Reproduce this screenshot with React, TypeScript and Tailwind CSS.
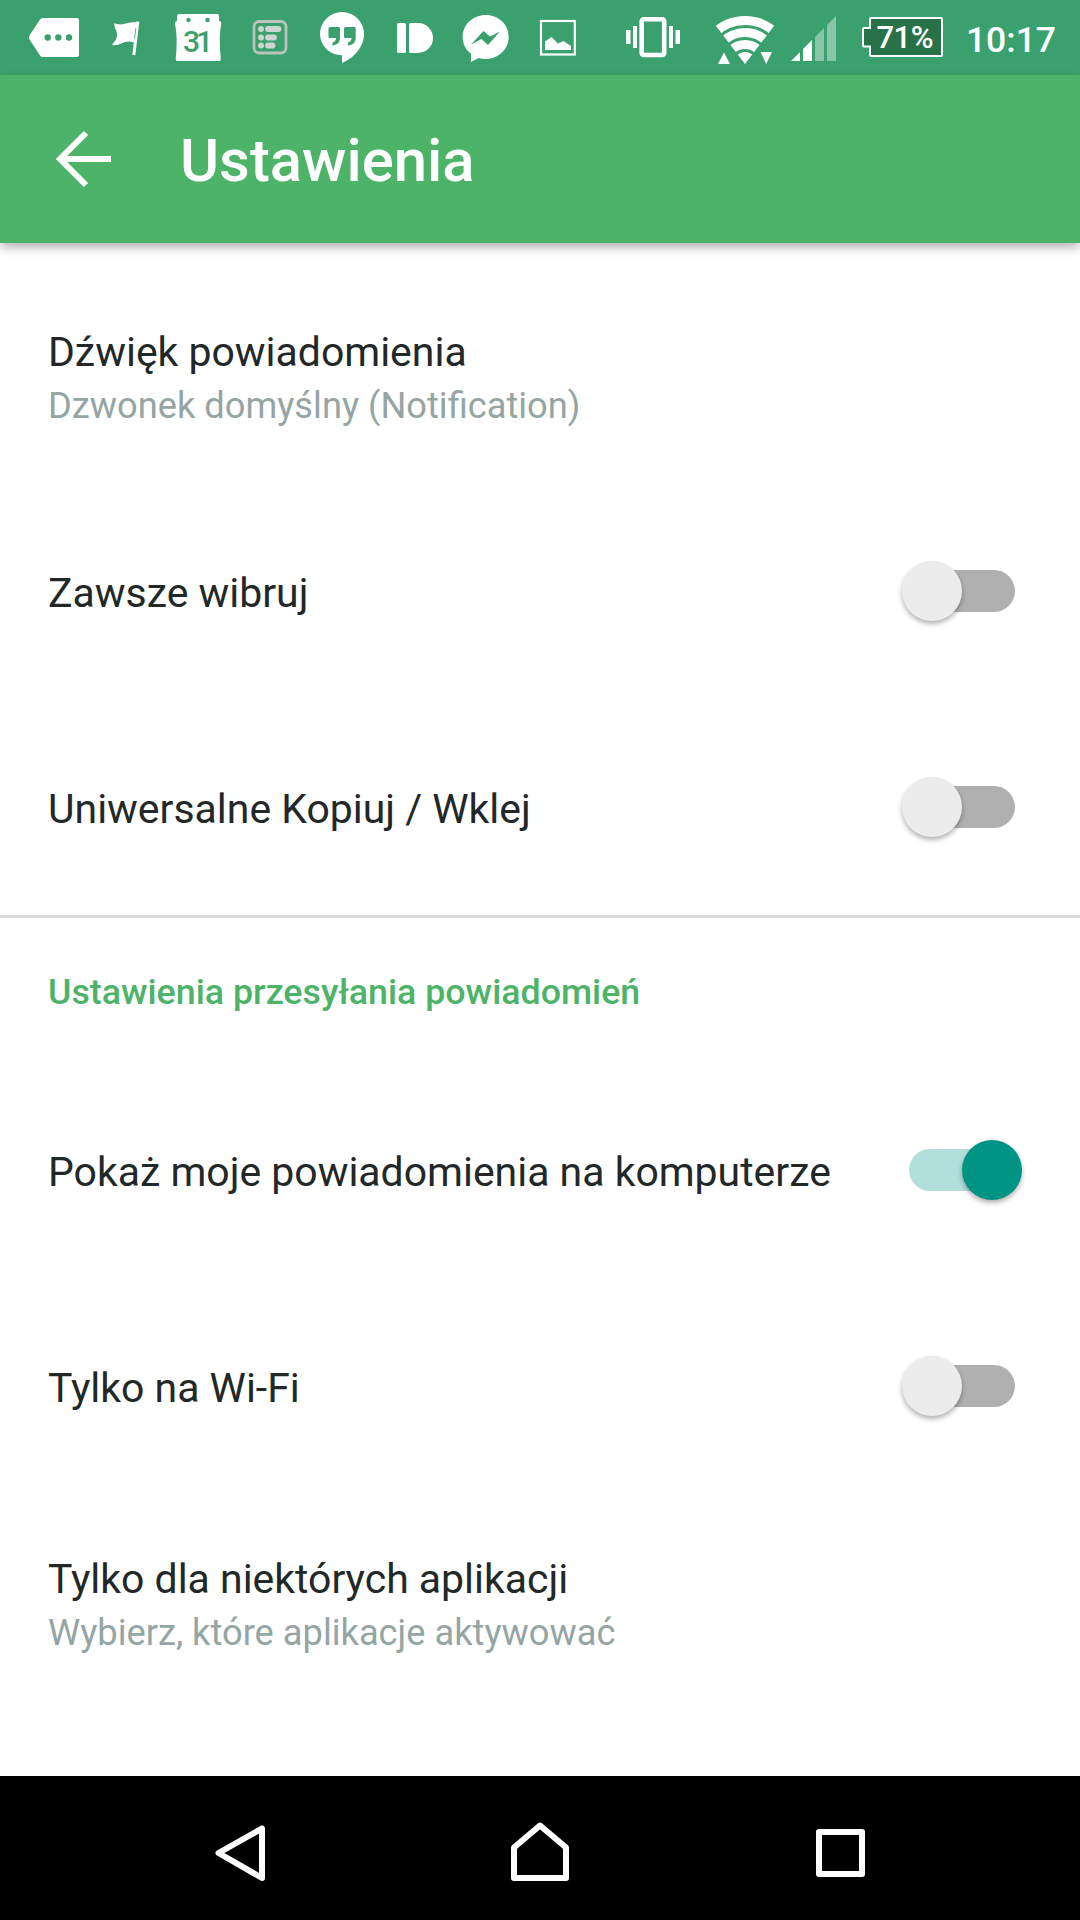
import React from 'react';

interface StatusSlotProps {
    x: number;
    width: number;
    children: React.ReactNode;
}

// Every slot shares the coordinate space of the status bar
const StatusSlot: React.FC<StatusSlotProps> = ({ x, width, children }) => (
    <svg className="shrink-0" width={width} height={75} viewBox={`${x} 0 ${width} 75`} fill="#fff">
        {children}
    </svg>
);

const StatusBar: React.FC = () => (
    <div className="flex h-[75px] bg-[#3aa06d] text-white">
        <StatusSlot x={0} width={100}>
            <path d="M43 18H76.500Q79 18 79 20.500V54.500Q79 57 76.500 57H43Q41 57 40 55.500L29.500 39.500Q28.500 37.500 29.500 35.500L40 19.500Q41 18 43 18Z" />
            <g fill="#3aa06d">
                <circle cx="47.700" cy="37.500" r="3.200" />
                <circle cx="58.300" cy="37.500" r="3.200" />
                <circle cx="69" cy="37.500" r="3.200" />
            </g>
        </StatusSlot>
        <StatusSlot x={100} width={50}>
            <path d="M114.500 23C122 27 128 21 137 22.500L134 42.500C124 39 120 47 112 45C115 41 117.500 38 117 34C116.500 29 113.500 27 114.500 23Z" />
            <path d="M136.500 21.300L139.300 21.800L135.300 55.300L132.300 54.800Z" />
            <path d="M135.800 28L134.600 38.500" stroke="#3aa06d" strokeWidth="0.800" />
        </StatusSlot>
        <StatusSlot x={150} width={90}>
            <path d="M179 14H217Q219 14 219 16V21Q221.500 21 221.200 24Q218.500 37 220.800 59Q221 61 219 61H177.500Q175.500 61 175.700 59Q178 37 175 24Q174.800 21 177 21V16Q177 14 179 14Z" />
            <circle cx="188.500" cy="20" r="2.200" fill="#3aa06d" />
            <circle cx="207.500" cy="20" r="2.200" fill="#3aa06d" />
            <text x="183" y="52" textLength="30" fill="#3aa06d" className="font-['Roboto',sans-serif] text-[30px] font-medium">31</text>
        </StatusSlot>
        <StatusSlot x={240} width={60}>
            <rect x="254" y="21.500" width="32" height="31.500" rx="5" fill="none" stroke="#bcc4ba" strokeWidth="2.800" />
            <g stroke="#cdd6ce" strokeWidth="5.800" strokeLinecap="round">
                <path d="M261 29h.1M261 37.500h.1M261 45.500h.1" />
                <path d="M268 29H278.500M268 37.500H274M268 45.500H272.500" />
            </g>
        </StatusSlot>
        <StatusSlot x={300} width={80}>
            <path d="M342 12A22 22 0 0 1 364 34C364 47 354 58 342 63V55.300A21.500 21.500 0 0 1 320 34A22 22 0 0 1 342 12Z" />
            <path fill="#3aa06d" d="M330 27H338.500Q340 27 340 28.500V38Q340 45 332.500 45.500V42.500Q336 41.500 336 38H330Q328.500 38 328.500 36.500V28.500Q328.500 27 330 27ZM345.500 27H354.200Q355.700 27 355.700 28.500V38Q355.700 45 348 45.500V42.500Q351.500 41.500 351.500 38H345.500Q344 38 344 36.500V28.500Q344 27 345.500 27Z" />
        </StatusSlot>
        <StatusSlot x={380} width={70}>
            <rect x="397" y="23" width="9" height="30" rx="1.500" />
            <path d="M410.500 23H418A15 15 0 0 1 418 53H410.500Q409 53 409 51.500V24.500Q409 23 410.500 23Z" />
        </StatusSlot>
        <StatusSlot x={450} width={80}>
            <path d="M485.700 15C498.500 15 508.700 24.500 508.700 37C508.700 49 498.500 59 485.700 59Q482 59 478.500 58L471 62V53.500C465.500 49.500 462.700 44 462.700 37C462.700 24.500 473 15 485.700 15Z" />
            <path fill="#3aa06d" d="M471 44.500L483.500 31L490 36.500L500 31.500L488 45L481.500 39Z" />
        </StatusSlot>
        <StatusSlot x={530} width={90}>
            <rect x="541" y="21" width="33.800" height="33.500" fill="none" stroke="#fff" strokeWidth="2.200" />
            <path d="M545 50V41.500L551.500 37L558 43.500L563.500 41L571 46V50Z" />
        </StatusSlot>
        <StatusSlot x={620} width={70}>
            <rect x="641.700" y="19.200" width="22.500" height="35.800" rx="2" fill="none" stroke="#fff" strokeWidth="4.600" />
            <path d="M626 30H630.500V44H626ZM633 26H637V48H633ZM669 26H673V48H669ZM675.500 30H680V44H675.500Z" />
        </StatusSlot>
        <StatusSlot x={690} width={95}>
            <clipPath id="wifi-wedge">
                <path d="M745 64L700 5H790Z" />
            </clipPath>
            <g clipPath="url(#wifi-wedge)">
                <circle cx="745" cy="64" r="12" />
                <g fill="none" stroke="#fff" strokeWidth="9">
                    <circle cx="745" cy="64" r="19.500" />
                    <circle cx="745" cy="64" r="31.500" />
                    <circle cx="745" cy="64" r="43.500" />
                </g>
            </g>
            <path d="M718 64L724 52.500L730 64ZM760.500 52H772L766.200 64Z" />
        </StatusSlot>
        <StatusSlot x={785} width={65}>
            <path d="M791 61L800 52V61ZM803 61V49L812 40V61Z" />
            <path opacity="0.400" d="M815 61V37L824 28V61ZM827 61V25L836 16V61Z" />
        </StatusSlot>
        <StatusSlot x={850} width={105}>
            <path d="M871 18H941Q942 18 942 19V55Q942 56 941 56H871Q870 56 870 55V46.500H864Q863 46.500 863 45.500V29Q863 28 864 28H870V19Q870 18 871 18Z" fill="#28724a" stroke="#fff" strokeWidth="2" />
            <text x="876.500" y="48" textLength="57" className="font-['Roboto',sans-serif] text-[31px] font-medium">71%</text>
        </StatusSlot>
        <span className="ml-auto mr-[24px] text-[35.5px] font-medium leading-[80px]">10:17</span>
    </div>
);

const Toolbar: React.FC = () => (
    <header className="relative z-10 flex h-[168px] items-center bg-[#4cb369] pl-[56px] text-white shadow-[0_5px_10px_-1px_rgba(0,0,0,0.32)]">
        <svg width="56" height="58" viewBox="0 0 56 58" fill="none" stroke="#fff" strokeWidth="6">
            <path d="M30 3L4 29L30 55M4 29H55" />
        </svg>
        <h1 className="ml-[68px] pt-[4px] text-[59.8px] font-medium leading-[72px]">Ustawienia</h1>
    </header>
);

const Switch: React.FC<{ on: boolean }> = ({ on }) => (
    <div className="relative flex h-[60px] w-[120px] shrink-0 items-center justify-center">
        <div className={on ? 'h-[42px] w-[106px] rounded-full bg-[#b2dfdb]' : 'h-[42px] w-[106px] rounded-full bg-[#b0b0b0]'} />
        <div
            className={
                on
                    ? 'absolute right-0 top-0 size-[60px] rounded-full bg-[#009485] shadow-[0_3px_5px_rgba(0,0,0,0.3)]'
                    : 'absolute left-0 top-0 size-[60px] rounded-full bg-[#ececec] shadow-[0_3px_5px_rgba(0,0,0,0.3)]'
            }
        />
    </div>
);

interface SettingRowProps {
    title: string;
    summary?: string;
    on?: boolean;
}

const SettingRow: React.FC<SettingRowProps> = ({ title, summary, on }) => (
    <div className="flex h-[216px] items-center justify-between pl-[48px] pr-[58px]">
        <div className="pt-[4px]">
            <p className="text-[40.95px] leading-[56px] text-[#212827]">{title}</p>
            {summary && <p className="pt-px text-[36.25px] leading-[49px] text-[#95a5a3]">{summary}</p>}
        </div>
        {on !== undefined && <Switch on={on} />}
    </div>
);

const NavigationBar: React.FC = () => (
    <nav className="flex h-[144px] items-center justify-between bg-black px-[210px] pt-[10px]">
        <svg width="60" height="70" viewBox="210 1818 60 70" fill="none" stroke="#fff" strokeWidth="6" strokeLinejoin="round">
            <path d="M262 1828.500V1878L218.500 1853Z" />
        </svg>
        <svg width="60" height="70" viewBox="510 1818 60 70" fill="none" stroke="#fff" strokeWidth="6" strokeLinejoin="round">
            <path d="M540 1825.500L566 1847.500V1878H514V1847.500Z" />
        </svg>
        <svg width="60" height="70" viewBox="810 1818 60 70" fill="none" stroke="#fff" strokeWidth="6" strokeLinejoin="round">
            <path d="M819 1832H862V1874H819Z" />
        </svg>
    </nav>
);

export default function App() {
    return (
        <div className="flex h-[1920px] w-[1080px] flex-col overflow-hidden bg-white font-['Roboto',sans-serif]">
            <StatusBar />
            <Toolbar />
            <main className="flex-1 pt-[24px]">
                <SettingRow title="Dźwięk powiadomienia" summary="Dzwonek domyślny (Notification)" />
                <SettingRow title="Zawsze wibruj" on={false} />
                <SettingRow title="Uniwersalne Kopiuj / Wklej" on={false} />
                <div className="h-[3px] bg-[#d9d9d9]" />
                <h2 className="h-[144px] pl-[48px] text-[35.75px] font-medium leading-[148px] text-[#4cb369]">
                    Ustawienia przesyłania powiadomień
                </h2>
                <SettingRow title="Pokaż moje powiadomienia na komputerze" on={true} />
                <SettingRow title="Tylko na Wi-Fi" on={false} />
                <SettingRow title="Tylko dla niektórych aplikacji" summary="Wybierz, które aplikacje aktywować" />
            </main>
            <NavigationBar />
        </div>
    );
}
